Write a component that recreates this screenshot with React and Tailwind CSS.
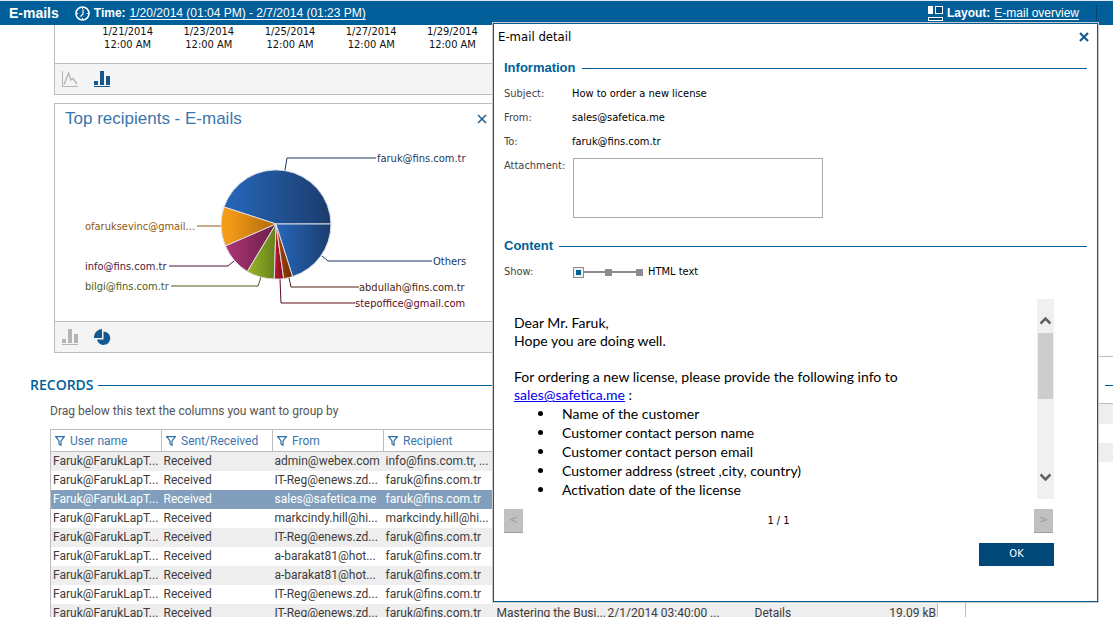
import { useState } from 'react';

const AXIS_LABELS = ['1/21/2014', '1/23/2014', '1/25/2014', '1/27/2014', '1/29/2014'];

const RECORDS = [
  { from: 'admin@webex.com', recipient: 'info@fins.com.tr, ...' },
  { from: 'IT-Reg@enews.zd...', recipient: 'faruk@fins.com.tr' },
  { from: 'sales@safetica.me', recipient: 'faruk@fins.com.tr' },
  { from: 'markcindy.hill@hi...', recipient: 'markcindy.hill@hi...' },
  { from: 'IT-Reg@enews.zd...', recipient: 'faruk@fins.com.tr' },
  { from: 'a-barakat81@hot...', recipient: 'faruk@fins.com.tr' },
  { from: 'a-barakat81@hot...', recipient: 'faruk@fins.com.tr' },
  { from: 'IT-Reg@enews.zd...', recipient: 'faruk@fins.com.tr' },
  {
    from: 'IT-Reg@enews.zd...',
    recipient: 'faruk@fins.com.tr',
    subject: 'Mastering the Busi...',
    date: '2/1/2014 03:40:00 ...',
    details: 'Details',
    size: '19.09 kB',
  },
];

const COLUMNS = ['User name', 'Sent/Received', 'From', 'Recipient'];

const CUSTOMER_INFO = [
  'Name of the customer',
  'Customer contact person name',
  'Customer contact person email',
  'Customer address (street ,city, country)',
  'Activation date of the license',
];

// edge points of the slices on the circle, with the leader line to each label
const SLICES = [
  { d: 'M221 90 L276 90 A55 55 0 0 0 169 73 Z', from: '#2563b4', to: '#1b3c6c', line: 'M230 36 L232 24 H321', ink: '#1b3663', label: 'faruk@fins.com.tr', x: 322, y: 28 },
  { d: 'M221 90 L169 73 A55 55 0 0 0 170.500 112 Z', from: '#f79c18', to: '#b0690a', line: 'M166 92 H142', ink: '#8f560b', label: 'ofaruksevinc@gmail...', x: 30, y: 96 },
  { d: 'M221 90 L170.500 112 A55 55 0 0 0 192.300 137.500 Z', from: '#a83272', to: '#682048', line: 'M179 127 L173 132 H114', ink: '#4f1638', label: 'info@fins.com.tr', x: 30, y: 136 },
  { d: 'M221 90 L192.300 137.500 A55 55 0 0 0 219.300 145 Z', from: '#95b128', to: '#64801a', line: 'M206 143 L203 152 H116', ink: '#4e5a14', label: 'bilgi@fins.com.tr', x: 30, y: 156 },
  { d: 'M221 90 L219.300 145 A55 55 0 0 0 228.700 144.700 Z', from: '#bd1730', to: '#7f0e1e', line: 'M225 145 L226 169 H300', ink: '#5c0c18', label: 'stepoffice@gmail.com', x: 300, y: 173 },
  { d: 'M221 90 L228.700 144.700 A55 55 0 0 0 237.700 142.500 Z', from: '#a84508', to: '#6e2c04', line: 'M234 144 L236 153 H304', ink: '#4a1e0c', label: 'abdullah@fins.com.tr', x: 304, y: 157 },
  { d: 'M221 90 L237.700 142.500 A55 55 0 0 0 276 90 Z', from: '#2563b4', to: '#1b3c6c', line: 'M267 122 L273 127 H377', ink: '#1b3663', label: 'Others', x: 378, y: 131 },
];

function ClockIcon() {
  return (
    <svg width="15" height="15" viewBox="0 0 15 15" fill="none" stroke="#fff">
      <circle cx="7.500" cy="7.500" r="6.500" strokeWidth="1.600" />
      <path d="M8 3.500 V8 L5.500 10.500" strokeWidth="1.200" />
      <path d="M7.500 2 v1 M7.500 12 v1 M2 7.500 h1 M12 7.500 h1" />
    </svg>
  );
}

function LayoutIcon() {
  return (
    <svg width="15" height="15" viewBox="0 0 15 15" shapeRendering="crispEdges">
      <rect x="0" y="0" width="5" height="8" fill="#fff" />
      <path d="M7.500 0.500 h7 v7 h-7 z M0.500 11.500 h14 v3 h-14 z" fill="#00497a" stroke="#fff" />
    </svg>
  );
}

function LineIcon() {
  return (
    <svg width="16" height="16" viewBox="0 0 16 16" fill="none" stroke="#b4b4b4">
      <path d="M0.500 0 V15.500 H16" />
      <path d="M2 13.500 L6.500 2 L9 9 L11 7.500 L15 13" strokeWidth="1.300" />
    </svg>
  );
}

function BarsIcon({ color }) {
  return (
    <svg width="16" height="16" viewBox="0 0 16 16" fill={color} shapeRendering="crispEdges">
      <path d="M0 10 h4 v4 h-4 z M6 0 h4 v14 h-4 z M12 5 h4 v9 h-4 z M0 15 h16 v1 h-16 z" />
    </svg>
  );
}

function PieIcon() {
  return (
    <svg width="17" height="16" viewBox="0 0 17 16" fill="#13598f">
      <path d="M8 9 H0 A8.500 8.500 0 0 1 8 0 Z" />
      <path d="M9.500 2.500 A6.700 6.700 0 1 1 3 10.500 H9.500 Z" />
    </svg>
  );
}

function FilterIcon() {
  return (
    <svg width="10" height="10" viewBox="0 0 10 10" fill="none" stroke="#2a6fa8" strokeWidth="1.200">
      <path d="M0.700 0.700 H9.300 L6 5 V9.200 L4 8 V5 Z" />
    </svg>
  );
}

function CloseIcon({ size, width }) {
  return (
    <svg width={size} height={size} viewBox="0 0 10 10" fill="none" stroke="#1b5a8c" strokeWidth={width}>
      <path d="M1 1 L9 9 M9 1 L1 9" />
    </svg>
  );
}

function ScrollArrow({ d }) {
  return (
    <svg width="11" height="9" viewBox="0 0 11 9" fill="none" stroke="#606060" strokeWidth="2.600">
      <path d={d} />
    </svg>
  );
}

function TopBar() {
  return (
    <header className="flex h-[25px] shrink-0 items-center border-t border-[#e3ebf0] bg-[#005f99] font-['Liberation_Sans',sans-serif] text-xs text-white">
      <h1 className="ml-[9px] text-sm font-bold">E-mails</h1>
      <div className="ml-4 flex items-center gap-1">
        <ClockIcon />
        <b>Time:</b>
        <a href="#time" className="underline underline-offset-2">1/20/2014 (01:04 PM) - 2/7/2014 (01:23 PM)</a>
      </div>
      <div className="ml-auto flex items-center gap-1">
        <LayoutIcon />
        <b>Layout:</b>
        <a href="#layout" className="underline underline-offset-2">E-mail overview</a>
      </div>
      <span className="mr-4 ml-[17px] h-4 w-px bg-[#00406e]" />
    </header>
  );
}

function CardFooter({ children }) {
  return (
    <div className="flex h-[31px] items-center gap-4 border-t border-[#bdbdbd] bg-[#f4f4f4] pl-[7px]">
      {children}
    </div>
  );
}

function TrafficCard() {
  return (
    <section className="w-[440px] border-x border-b border-[#bdbdbd] bg-white">
      <div className="flex h-[38px] pl-8 font-['DejaVu_Sans_Condensed','DejaVu_Sans',sans-serif] text-[11px] leading-[13px] text-[#111]">
        {AXIS_LABELS.map((day) => (
          <div key={day} className="w-[82px] text-center">
            {day}
            <br />
            12:00 AM
          </div>
        ))}
      </div>
      <CardFooter>
        <button type="button" aria-label="Line chart"><LineIcon /></button>
        <button type="button" aria-label="Bar chart"><BarsIcon color="#13598f" /></button>
      </CardFooter>
    </section>
  );
}

function RecipientsCard() {
  return (
    <section className="mt-2 w-[440px] border border-[#bdbdbd] bg-white">
      <div className="flex h-[30px] items-center justify-between pr-[6px] pl-[10px]">
        <h2 className="font-['Liberation_Sans',sans-serif] text-[17px] text-[#3a76ad]">Top recipients - E-mails</h2>
        <button type="button" aria-label="Close"><CloseIcon size={10} width={1.500} /></button>
      </div>
      <svg width="438" height="187" viewBox="0 0 438 187" className="block font-['DejaVu_Sans_Condensed','DejaVu_Sans',sans-serif] text-[11px]">
        <defs>
          {SLICES.map((slice) => (
            <linearGradient key={slice.label} id={`fill-${slice.x}-${slice.y}`}>
              <stop offset="0.100" stopColor={slice.from} />
              <stop offset="1" stopColor={slice.to} />
            </linearGradient>
          ))}
        </defs>
        {SLICES.map((slice) => (
          <g key={slice.label}>
            <path d={slice.line} fill="none" stroke={slice.ink} />
            <path d={slice.d} fill={`url(#fill-${slice.x}-${slice.y})`} stroke="#dcdce4" />
            <text x={slice.x} y={slice.y} fill={slice.ink}>{slice.label}</text>
          </g>
        ))}
      </svg>
      <CardFooter>
        <button type="button" aria-label="Bar chart"><BarsIcon color="#b4b4b4" /></button>
        <button type="button" aria-label="Pie chart"><PieIcon /></button>
      </CardFooter>
    </section>
  );
}

function Records() {
  const cell = 'py-0 pr-0 pl-[2px] whitespace-nowrap';

  return (
    <section className="mt-5 pl-[30px] font-['Roboto',sans-serif] text-xs">
      <div className="flex h-6 items-center gap-1 text-[#005f99]">
        <h2 className="font-['Open_Sans',sans-serif] text-sm font-semibold">RECORDS</h2>
        <span className="h-px flex-1 bg-[#005f99]" />
      </div>
      <div className="pl-5">
        <p className="h-8 pt-[6px] text-[#555]">Drag below this text the columns you want to group by</p>
        <table className="w-[888px] table-fixed border-collapse text-left text-[#3c3c3c]">
          <colgroup>
            <col className="w-[111px]" />
            <col className="w-[111px]" />
            <col className="w-[111px]" />
            <col className="w-[111px]" />
            <col className="w-[111px]" />
            <col className="w-[147px]" />
            <col className="w-[111px]" />
            <col />
          </colgroup>
          <thead>
            <tr className="h-[22px]">
              {COLUMNS.map((name) => (
                <th key={name} className="border border-[#bdbdbd] p-0 pl-1 font-normal text-[#3a76ad]">
                  <span className="flex items-center gap-[5px]">
                    <FilterIcon />
                    {name}
                  </span>
                </th>
              ))}
              <th colSpan="4" className="border border-[#bdbdbd]" />
            </tr>
          </thead>
          <tbody className="border-x border-[#bdbdbd]">
            {RECORDS.map((row, i) => (
              <tr
                key={i}
                className={i === 2 ? 'h-[19px] bg-[#819fbc] text-white' : 'h-[19px] odd:bg-[#eee]'}
              >
                <td className={cell}>Faruk@FarukLapT...</td>
                <td className={cell}>Received</td>
                <td className={cell}>{row.from}</td>
                <td className={cell}>{row.recipient}</td>
                <td className={cell}>{row.subject}</td>
                <td className={cell}>{row.date}</td>
                <td className={cell}>{row.details}</td>
                <td className="pr-px text-right whitespace-nowrap">{row.size}</td>
              </tr>
            ))}
          </tbody>
        </table>
      </div>
    </section>
  );
}

function SidePanel() {
  return (
    <aside className="w-[147px] shrink-0">
      <div className="h-[332px] border-b border-[#bdbdbd]" />
      <div className="flex h-[47px] items-center border-b border-[#bdbdbd] pt-[11px]">
        <span className="ml-[139px] h-px flex-1 bg-[#005f99]" />
      </div>
      <div className="h-5 bg-[#eee]" />
      <div className="mt-[19px] h-[19px] bg-[#eee]" />
    </aside>
  );
}

function Heading({ children }) {
  return (
    <div className="flex h-5 items-center gap-[6px] text-[#005f99]">
      <h3 className="font-['Liberation_Sans',sans-serif] text-[13px] font-bold">{children}</h3>
      <span className="h-px flex-1 bg-[#005f99]" />
    </div>
  );
}

function Field({ label, children }) {
  return (
    <div className="flex h-6 items-center">
      <span className="w-[68px] text-[#444]">{label}</span>
      <span>{children}</span>
    </div>
  );
}

function ShowSlider() {
  const [mode, setMode] = useState(0);

  return (
    <div className="mt-1 flex h-6 items-center">
      <label htmlFor="show" className="w-[69px] text-[#444]">Show:</label>
      <div className="relative flex w-[70px] items-center">
        <span className="absolute inset-x-0 h-[2px] bg-[#8c8c8c]" />
        <span className="absolute left-8 size-[7px] bg-[#8c8c8c]" />
        <span className="absolute right-0 size-[7px] bg-[#8c8c8c]" />
        <input
          id="show"
          type="range"
          min="0"
          max="2"
          value={mode}
          onChange={(e) => setMode(Number(e.target.value))}
          className="relative h-[11px] w-full appearance-none bg-transparent [&::-webkit-slider-thumb]:size-[11px] [&::-webkit-slider-thumb]:appearance-none [&::-webkit-slider-thumb]:border [&::-webkit-slider-thumb]:border-[#8c8c8c] [&::-webkit-slider-thumb]:bg-[#005f99] [&::-webkit-slider-thumb]:shadow-[inset_0_0_0_2px_#f0f0f0]"
        />
      </div>
      <span className="ml-[5px]">HTML text</span>
    </div>
  );
}

function MessageBody() {
  return (
    <div className="mt-[15px] flex h-[200px]">
      <div className="flex-1 pt-[15px] pl-[10px] font-['Lato',sans-serif] text-sm leading-[18px]">
        <p>Dear Mr. Faruk,</p>
        <p>Hope you are doing well.</p>
        <p className="mt-[18px]">
          For ordering a new license, please provide the following info to
          <br />
          <a href="mailto:sales@safetica.me" className="text-[#0000ee] underline">sales@safetica.me</a> :
        </p>
        <ul className="pl-6 leading-[19px]">
          {CUSTOMER_INFO.map((item) => (
            <li key={item} className="flex items-center gap-[19px]">
              <span className="size-[5px] rounded-full bg-black" />
              {item}
            </li>
          ))}
        </ul>
      </div>
      <div className="flex w-[17px] flex-col items-center bg-[#f0f0f0] pt-[17px] pb-[17px]">
        <ScrollArrow d="M0.500 7.500 L5.500 2.500 L10.500 7.500" />
        <div className="mt-2 h-[66px] w-[15px] bg-[#cdcdcd]" />
        <div className="mt-auto">
          <ScrollArrow d="M0.500 1.500 L5.500 6.500 L10.500 1.500" />
        </div>
      </div>
    </div>
  );
}

function EmailDialog() {
  const pager = 'h-6 w-[19px] border-b border-[#a0a0a0] bg-[#c0c0c0] text-[#98988c]';

  return (
    <div
      role="dialog"
      aria-label="E-mail detail"
      className="absolute top-[22px] right-[14px] w-[607px] border border-[#c8c8c8] font-['DejaVu_Sans_Condensed','DejaVu_Sans',sans-serif] text-[11px] text-black"
    >
      <div className="border border-[#005f99] bg-white pb-[35px]">
        <div className="flex h-[26px] items-center justify-between pr-2 pl-1">
          <h2 className="text-[13px]">E-mail detail</h2>
          <button type="button" aria-label="Close dialog"><CloseIcon size={10} width={2.200} /></button>
        </div>
        <div className="pr-[10px] pl-[10px]">
          <div className="mt-2"><Heading>Information</Heading></div>
          <div className="mt-1">
            <Field label="Subject:">How to order a new license</Field>
            <Field label="From:">sales@safetica.me</Field>
            <Field label="To:">faruk@fins.com.tr</Field>
            <div className="mt-1 flex">
              <label htmlFor="attachment" className="w-[69px] text-[#444]">Attachment:</label>
              <textarea id="attachment" readOnly className="h-[60px] w-[250px] resize-none border border-[#a4abb3] bg-white" />
            </div>
          </div>
          <div className="mt-[18px]"><Heading>Content</Heading></div>
          <ShowSlider />
          <div className="pr-[33px]">
            <MessageBody />
            <div className="mt-[10px] flex items-center justify-between pr-px">
              <button type="button" className={pager} aria-label="Previous">&lt;</button>
              <span>1 / 1</span>
              <button type="button" className={pager} aria-label="Next">&gt;</button>
            </div>
            <div className="mt-[10px] flex justify-end">
              <button type="button" className="h-[23px] w-[75px] bg-[#004878] text-white">OK</button>
            </div>
          </div>
        </div>
      </div>
    </div>
  );
}

function App() {
  return (
    <div className="relative flex h-screen flex-col overflow-hidden bg-white">
      <TopBar />
      <div className="flex flex-1">
        <main className="min-w-0 flex-1 border-r border-[#bdbdbd]">
          <div className="pl-[54px]">
            <TrafficCard />
            <RecipientsCard />
          </div>
          <Records />
        </main>
        <SidePanel />
      </div>
      <EmailDialog />
    </div>
  );
}

export default App;
